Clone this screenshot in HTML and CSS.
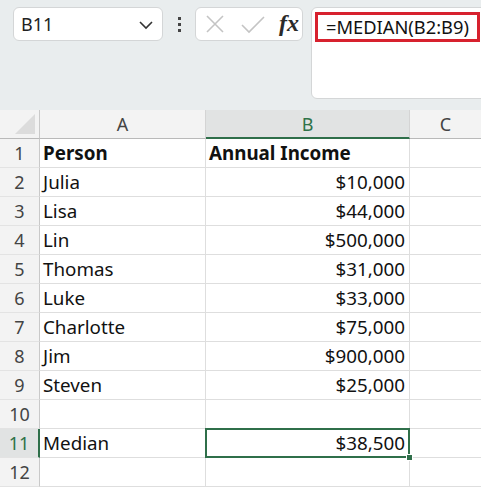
FILE: index.html
```html
<!DOCTYPE html>
<html>
<head>
<meta charset="utf-8">
<link rel="stylesheet" href="styles.css">
</head>
<body>
<div class="app">
  <div class="toolbar">
    <div class="namebox">
      <span class="namebox-text">B11</span>
      <svg class="chev" width="16" height="10" viewBox="0 0 16 10"><polyline points="2,2 8,8 14,2" fill="none" stroke="#333" stroke-width="1.6"/></svg>
    </div>
    <div class="dots"><i></i><i></i><i></i></div>
    <div class="fbtns">
      <svg class="ico-x" width="20" height="20" viewBox="0 0 20 20"><path d="M2 2 L18 18 M18 2 L2 18" stroke="#c4c4c4" stroke-width="1.6" fill="none"/></svg>
      <svg class="ico-check" width="24" height="20" viewBox="0 0 24 20"><path d="M1 10 L8 17 L23 2" stroke="#c4c4c4" stroke-width="1.6" fill="none"/></svg>
      <span class="fx">fx</span>
    </div>
    <div class="formulabar">
      <span class="formula">=MEDIAN(B2:B9)</span>
    </div>
  </div>
  <div class="sheet">
    <div class="corner"><span class="tri"></span></div>
    <div class="colhead">A</div>
    <div class="colhead sel">B</div>
    <div class="colhead last">C</div>

    <div class="rowhead">1</div><div class="cell bold">Person</div><div class="cell bold">Annual Income</div><div class="cell last"></div>
    <div class="rowhead">2</div><div class="cell">Julia</div><div class="cell num">$10,000</div><div class="cell last"></div>
    <div class="rowhead">3</div><div class="cell">Lisa</div><div class="cell num">$44,000</div><div class="cell last"></div>
    <div class="rowhead">4</div><div class="cell">Lin</div><div class="cell num">$500,000</div><div class="cell last"></div>
    <div class="rowhead">5</div><div class="cell">Thomas</div><div class="cell num">$31,000</div><div class="cell last"></div>
    <div class="rowhead">6</div><div class="cell">Luke</div><div class="cell num">$33,000</div><div class="cell last"></div>
    <div class="rowhead">7</div><div class="cell">Charlotte</div><div class="cell num">$75,000</div><div class="cell last"></div>
    <div class="rowhead">8</div><div class="cell">Jim</div><div class="cell num">$900,000</div><div class="cell last"></div>
    <div class="rowhead">9</div><div class="cell">Steven</div><div class="cell num">$25,000</div><div class="cell last"></div>
    <div class="rowhead">10</div><div class="cell"></div><div class="cell"></div><div class="cell last"></div>
    <div class="rowhead sel">11</div><div class="cell">Median</div><div class="cell num active">$38,500<span class="handle"></span></div><div class="cell last"></div>
    <div class="rowhead">12</div><div class="cell"></div><div class="cell"></div><div class="cell last"></div>
  </div>
</div>
</body>
</html>
```
FILE: styles.css
```css
* { box-sizing: border-box; }
html, body { margin: 0; padding: 0; }
body {
  width: 481px;
  height: 487px;
  overflow: hidden;
  background: #ffffff;
  font-family: "Noto Sans", "Liberation Sans", sans-serif;
  color: #000;
}
.app { width: 481px; }
.toolbar {
  height: 110px;
  background: #e9edee;
  display: flex;
  align-items: flex-start;
  padding: 7px 0 0 13px;
  overflow: hidden;
}
.namebox {
  width: 150px;
  height: 34px;
  background: #fff;
  border: 1px solid #d4d6d7;
  border-radius: 6px;
  display: flex;
  align-items: center;
  justify-content: space-between;
  padding: 0 8px 0 7px;
  flex-shrink: 0;
}
.namebox-text { font-size: 18px; color: #222; }
.chev { margin-top: 2px; }
.dots {
  width: 32px;
  height: 34px;
  display: flex;
  flex-direction: column;
  align-items: center;
  justify-content: center;
  gap: 3px;
  flex-shrink: 0;
}
.dots i { display: block; width: 3px; height: 3px; background: #444; }
.fbtns {
  width: 108px;
  height: 34px;
  background: #fff;
  border: 1px solid #d4d6d7;
  border-radius: 6px;
  display: flex;
  align-items: center;
  padding: 0 0 0 9px;
  flex-shrink: 0;
}
.ico-x { margin-right: 16px; }
.ico-check { margin-right: 14px; margin-top: 1px; }
.fx {
  font-family: "Liberation Serif", "DejaVu Serif", serif;
  font-style: italic;
  font-weight: 700;
  font-size: 24px;
  color: #2a2a2a;
  line-height: 1;
  margin-top: -3px;
}
.formulabar {
  margin-left: 8px;
  width: 200px;
  height: 92px;
  background: #fff;
  border: 1px solid #d4d6d7;
  border-radius: 6px;
  padding: 4px 0 0 3px;
  flex-shrink: 0;
}
.formula {
  display: inline-block;
  width: 165px;
  height: 30px;
  border: 3px solid #d7212e;
  font-size: 18.3px;
  line-height: 24px;
  padding-left: 8px;
  color: #111;
  white-space: nowrap;
}
.sheet {
  display: grid;
  grid-template-columns: 40px 166px 204px 71px;
  grid-auto-rows: 29px;
}
.corner {
  background: #f3f3f3;
  border-right: 1px solid #c9c9c9;
  border-bottom: 1px solid #b9b9b9;
  position: relative;
}
.tri {
  position: absolute;
  right: 4px;
  bottom: 4px;
  width: 0;
  height: 0;
  border-left: 20px solid transparent;
  border-bottom: 20px solid #dcdcdc;
}
.colhead {
  background: #f3f3f3;
  border-right: 1px solid #d4d4d4;
  border-bottom: 1px solid #b9b9b9;
  display: flex;
  align-items: center;
  justify-content: center;
  font-size: 18px;
  color: #444;
}
.colhead.sel {
  background: #e1e3e3;
  color: #2f7248;
  border-bottom: 2px solid #2f6f4a;
  padding-top: 1px;
}
.colhead.last { border-right: none; }
.rowhead {
  background: #f3f3f3;
  border-right: 1px solid #c9c9c9;
  border-bottom: 1px solid #e3e3e3;
  display: flex;
  align-items: center;
  justify-content: center;
  font-size: 18px;
  color: #444;
}
.rowhead.sel {
  background: #e1e3e3;
  color: #2f7248;
  border-right: 2px solid #2f6f4a;
}
.cell {
  border-right: 1px solid #dedede;
  border-bottom: 1px solid #dedede;
  display: flex;
  align-items: center;
  padding: 0 4px 0 3px;
  font-size: 18.8px;
  white-space: nowrap;
  color: #111;
}
.cell.last { border-right: none; }
.cell.bold { font-weight: 700; }
.cell.num { justify-content: flex-end; }
.cell.active { position: relative; }
.cell.active::after {
  content: "";
  position: absolute;
  left: -1px;
  top: -1px;
  right: -1px;
  bottom: -1px;
  border: 2px solid #2f6f4a;
  pointer-events: none;
}
.handle {
  position: absolute;
  right: -4px;
  bottom: -4px;
  width: 7px;
  height: 7px;
  background: #2f6f4a;
  border: 1px solid #fff;
  z-index: 2;
}
```
